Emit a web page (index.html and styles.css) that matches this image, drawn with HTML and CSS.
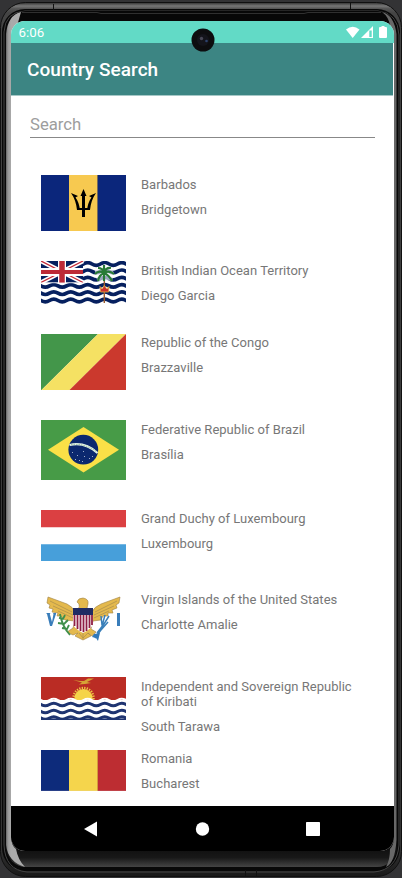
FILE: index.html
```html
<!DOCTYPE html>
<html lang="en">
<head>
<meta charset="utf-8">
<title>Country Search</title>
<link rel="stylesheet" href="styles.css">
</head>
<body>
<div class="device">
  <svg class="frame" viewBox="0 0 402 878" aria-hidden="true">
    <defs>
      <linearGradient id="rim" x1="0" y1="0" x2="0" y2="1">
        <stop offset="0" stop-color="#303030"/><stop offset=".004" stop-color="#777"/><stop offset=".007" stop-color="#555"/><stop offset=".012" stop-color="#444"/><stop offset=".97" stop-color="#333"/><stop offset="1" stop-color="#181818"/>
      </linearGradient>
      <linearGradient id="chin" x1="0" y1="840" x2="0" y2="867" gradientUnits="userSpaceOnUse">
        <stop offset="0" stop-color="#080808"/><stop offset=".65" stop-color="#181818"/><stop offset="1" stop-color="#444"/>
      </linearGradient>
      <linearGradient id="edge" x1="6" y1="0" x2="11" y2="0" gradientUnits="userSpaceOnUse">
        <stop offset="0" stop-color="#666"/><stop offset=".4" stop-color="#999"/><stop offset="1" stop-color="#aaa"/>
      </linearGradient>
    </defs>
    <rect width="402" height="878" fill="#333335"/>
    <rect x=".5" y="2.500" width="401" height="874" rx="25" fill="url(#rim)" stroke="#101010"/>
    <rect x="2" y="9" width="398" height="862" rx="23" fill="#080808"/>
    <path d="M4 845V32Q5 12 25 11H378Q398 13 399 35V845Q397 870 374 872H27Q5 870 4 845" fill="none" stroke="#444"/>
    <rect x="6" y="11" width="391" height="856" rx="20" fill="url(#chin)"/>
    <path d="M6 34Q8 15 21 12L17 26Q11 31 11 41V836Q11 845 16 849Q18 860 25 867Q8 862 6 845Z" fill="url(#edge)"/>
    <path d="M382 12Q394 15 396.500 34V840Q395 863 386 867Q390 860 390 849Q394 845 394 836V41Q394 30 390 26Q389 17 382 12Z" fill="#686868"/>
    <path d="M22 12.500H97L101 13.500H304L308 12.500H381" fill="none" stroke="#303030"/>
    <path d="M53.500 4V10M350.500 3V9M245.500 870V876M256.500 870V876" stroke="#111"/>
  </svg>
  <div class="screen">
    <header class="status">
      <span>6:06</span>
      <svg class="status-icons" viewBox="0 0 42 13" fill="#fff" aria-hidden="true">
        <path d="M0 3.500Q6.700-2 13.500 3.500L6.700 12Z"/>
        <path d="M27 0V12H15Z"/><path d="M23.300 4.500H25.700V11H23.300Z" fill="#62dac6"/>
        <path d="M34 1H35.500V0H38.500V1H40Q41 1 41 2V11Q41 12 40 12H34Q33 12 33 11V2Q33 1 34 1Z"/>
      </svg>
    </header>
    <div class="toolbar"><h1>Country Search</h1></div>
    <main>
      <input class="search" type="text" placeholder="Search" aria-label="Search">
      <ul class="list">
        <li class="row">
          <svg class="flag" style="height:56px" viewBox="0 0 85 56"><path fill="#0b267b" d="M0 0H85V56H0Z"/><path fill="#f7c950" d="M28 0H57V56H28Z"/><path d="M56.500 0V56" stroke="#776b5a"/>
            <path d="M42.500 18V42" stroke="#000" stroke-width="3"/><path d="M37 34H48.500" stroke="#000" stroke-width="2"/><path d="M42.500 14L45.500 21H39.500Z"/><path d="M30 18L37 21L34.500 22.500Q38 27 39 35H36Q35 25 30 18ZM55 18L48 21L50.500 22.500Q47 27 46 35H49Q50 25 55 18Z"/></svg>
          <div class="text"><p>Barbados</p><p>Bridgetown</p></div>
        </li>
        <li class="row">
          <svg class="flag" style="height:42.5px" viewBox="0 0 85 42.500">
            <defs><path id="wave" d="M-8.500 0Q-4.250-2.600 0 0T8.500 0T17 0T25.500 0T34 0T42.500 0T51 0T59.500 0T68 0T76.500 0T85 0T93.500 0"/></defs>
            <path fill="#fff" d="M0 0H85V43H0Z"/>
            <g fill="none" stroke="#06205f" stroke-width="3.700"><use href="#wave" y="3"/><use href="#wave" y="10.300"/><use href="#wave" y="17.600"/><use href="#wave" y="24.900"/><use href="#wave" y="32.200"/><use href="#wave" y="39.500"/></g>
            <path fill="#06205f" d="M0 0H42V21.500H0Z"/><path d="M0 0L42 21.500M42 0L0 21.500" stroke="#fff" stroke-width="4.500"/><path d="M0 0L42 21.500M42 0L0 21.500" stroke="#c52a37" stroke-width="1.300"/><path d="M21 0V22M0 11H42" stroke="#fff" stroke-width="8"/><path d="M21 0V22" stroke="#bd2936" stroke-width="5.500"/><path d="M0 11H42" stroke="#bd2936" stroke-width="4"/>
            <path d="M0 21.800H42" stroke="#fff" stroke-width=".6"/>
            <path d="M63.300 13V42" stroke="#9b5a2c" stroke-width="1.400"/>
            <path d="M54 9L60 5L64 3L70 6L73 12L71 20L64 19L57 21L54 14Z" fill="#fff" opacity=".6"/>
            <path fill="none" stroke="#287a36" stroke-width="2.200" d="M54 13Q58 9 63 12Q68 9 73 13M57 7Q62 7 63 12Q65 6 70 7M63 4V20M57 20Q58 14 63 12Q68 14 71 20"/>
            <path d="M59 25.500L61 28L63.300 24.500L66 28L68 25.500L67.500 31H59.500Z" fill="#ca3030" stroke="#e5b442" stroke-width=".8"/>
          </svg>
          <div class="text"><p>British Indian Ocean Territory</p><p>Diego Garcia</p></div>
        </li>
        <li class="row">
          <svg class="flag" style="height:56.5px" viewBox="0 0 85 56.500"><path fill="#43964a" d="M0 0H57L0 56.500Z"/><path fill="#f5e163" d="M57 0H85L28 56.500H0Z"/><path fill="#cb392d" d="M85 0V56.500H28Z"/></svg>
          <div class="text"><p>Republic of the Congo</p><p>Brazzaville</p></div>
        </li>
        <li class="row">
          <svg class="flag" style="height:59.6px" viewBox="0 0 85 59.600"><path fill="#479b47" d="M0 0H85V60H0Z"/><path fill="#fae047" d="M7 29.800L42.500 7L78 29.800L42.500 52.500Z"/><circle cx="42.300" cy="29.700" r="14.900" fill="#0b286f"/><path d="M28.500 25Q44 21.500 56.500 33" fill="none" stroke="#e8f5e9" stroke-width="2.200"/><path d="M30 24.500Q44 23 56 32" fill="none" stroke="#7cac88" stroke-width=".8" stroke-dasharray="1.500 1"/>
            <path fill="#c5d0df" opacity=".8" d="M31 32h1v1h-1zM36 35h1v1h-1zM42 31h1v1h-1zM34 39h1v1h-1zM43 36h1v1h-1zM48 38h1v1h-1zM51 36h1v1h-1zM41 41h1v1h-1zM38 40h1v1h-1z"/></svg>
          <div class="text"><p>Federative Republic of Brazil</p><p>Brasília</p></div>
        </li>
        <li class="row">
          <svg class="flag" style="height:51px" viewBox="0 0 85 51"><path fill="#fff" d="M0 0H85V51H0Z"/><path fill="#db4042" d="M0 0H85V17.300H0Z"/><path fill="#479fda" d="M0 34.300H85V51H0Z"/></svg>
          <div class="text"><p>Grand Duchy of Luxembourg</p><p>Luxembourg</p></div>
        </li>
        <li class="row">
          <svg class="flag" style="height:56.4px" viewBox="0 0 85 56.400"><path fill="#fff" d="M0 0H85V57H0Z"/>
            <path fill="#e4b94d" stroke="#9d8042" stroke-width=".6" d="M34 30L24 29L20 25L16 25L17 22L11 21L12 18L8 17L9 14L6 12L7 6L26 13Q32 16 34 21L37 18Q39 16 38 13L36 11Q37 7 42 7Q48 8 47 13L46 17Q50 18 51 21Q53 16 60 13L79 6L78 12L75 14L76 17L71 19L72 22L67 22L67 25L62 25L60 29L52 30L50 38L55 41L51 45L47 42L50 45L42 49L34 45L37 42L32 44L26 41L32 37Z"/>
            <path fill="none" stroke="#a78c4d" stroke-width=".7" d="M9 10L31 21M12 15L32 24M17 20L32 27M76 10L54 21M73 15L53 24M68 20L53 27M38 42L42 47L47 42M42 40V48"/>
            <path fill="#fff" d="M32 23H52V32Q52 37 42 42Q32 37 32 32Z"/><path fill="#202b63" d="M32 17H52V24H32Z"/><path d="M33.500 24V35M36.500 24V38M39.500 24V40M42.500 24V41M45.500 24V40M48.500 24V37M51 24V34" stroke="#8f1f45" stroke-width="1.800"/>
            <path fill="none" stroke="#3f8f4b" stroke-width="1.800" d="M19 23Q21 35 29 44M18 27L22 28L24 24M17 32L23 33L27 29M21 37L26 38L28 34"/>
            <path fill="none" stroke="#397fb9" stroke-width="1.500" d="M64 24L60 39L54 47M68 25L63 33L56 42M60 25L61 34M67 31L60 39"/><path fill="#3179b9" d="M53 43L59 42L57 50L55 47L51 46Z"/>
            <path fill="#397dba" d="M5 22H9.500L8.800 23L11 31L12.500 23L12 22H15V23L11 35H9L6 23L5 22ZM76 22H79V35H76Z"/>
          </svg>
          <div class="text"><p>Virgin Islands of the United States</p><p>Charlotte Amalie</p></div>
        </li>
        <li class="row">
          <svg class="flag" style="height:43px" viewBox="0 0 85 43"><path fill="#ba2c24" d="M0 0H85V23H0Z"/>
            <circle cx="42.500" cy="21" r="10" fill="none" stroke="#efc743" stroke-width="2.500" stroke-dasharray="1.300 1.200"/><circle cx="42.500" cy="21" r="9" fill="#f5d448"/>
            <path fill="#fff" d="M0 23H85V43H0Z"/>
            <use href="#wave" y="23" fill="none" stroke="#fff" stroke-width="2"/>
            <g fill="none" stroke="#1f3471" stroke-width="3"><use href="#wave" y="27.500"/><use href="#wave" y="34.500"/><use href="#wave" y="41"/></g>
            <path d="M0 42.300H85" stroke="#1f3471" stroke-width="1.400"/>
            <path fill="#d6a435" d="M32 3L39 4L43 4L47 1.500L53 1.500L46 5L50 6L44 7L38 7.500L41 5.500Z"/></svg>
          <div class="text"><p>Independent and Sovereign Republic of Kiribati</p><p>South Tarawa</p></div>
        </li>
        <li class="row">
          <svg class="flag" style="height:41.5px" viewBox="0 0 85 41.500"><path fill="#0d2b7b" d="M0 0H28V41H0Z"/><path fill="#f5d54c" d="M28 0H57V41H28Z"/><path fill="#bd2d32" d="M57 0H85V41H57Z"/><path d="M56.500 0V41" stroke="#d29b3d"/><path d="M0 41.300H85" stroke="#ded3e4" stroke-width=".7"/></svg>
          <div class="text last"><p>Romania</p><p>Bucharest</p></div>
        </li>
      </ul>
    </main>
    <nav class="nav">
      <svg viewBox="0 0 16 16"><path d="M1 8L14 .500V15.500Z" fill="#fff"/></svg>
      <svg viewBox="0 0 16 16"><circle cx="8.500" cy="8" r="6.700" fill="#fff"/></svg>
      <svg viewBox="0 0 16 16"><rect x="1" y="1" width="14" height="14" rx=".7" fill="#fff"/></svg>
    </nav>
  </div>
  <svg class="camera" viewBox="0 0 24 24" aria-hidden="true"><circle cx="12" cy="12" r="11.500" fill="#0d0d0f"/><circle cx="12" cy="12" r="6" fill="#14141b"/><circle cx="10.500" cy="10.500" r="1.700" fill="#484755"/><circle cx="15.500" cy="13" r="1.300" fill="#2d426c"/></svg>
</div>
</body>
</html>
```
FILE: styles.css
```css
* { box-sizing: border-box; }

body {
  margin: 0;
  font-family: Roboto, sans-serif;
  overflow: hidden;
}

.device {
  position: relative;
  width: 402px;
  height: 878px;
  padding: 21px 8px 27px 11px;
}

.frame {
  position: absolute;
  inset: 0;
  width: 402px;
  height: 878px;
}

.screen {
  position: relative;
  display: flex;
  flex-direction: column;
  height: 830px;
  border-radius: 14px;
  overflow: hidden;
  background: #fff;
}

.status {
  display: flex;
  flex: none;
  justify-content: space-between;
  align-items: center;
  height: 22px;
  padding: 0 6px 0 7.5px;
  background: #62dac6;
  color: #fff;
  font-size: 13.3px;
}

.status-icons {
  width: 42px;
  height: 13px;
}

.toolbar {
  display: flex;
  flex: none;
  align-items: center;
  height: 53px;
  margin-right: 1px;
  padding: 1px 16px 0;
  background: #3c8583;
  border-bottom: 1px solid #a6c8c7;
  color: #fff;
}

h1 {
  margin: 0;
  font-size: 19px;
  font-weight: 500;
  letter-spacing: 0.05px;
}

main {
  flex: 1;
  min-height: 0;
  overflow: hidden;
}

.search {
  display: block;
  width: 345px;
  height: 27px;
  margin: 15px 0 22px 19px;
  padding: 0;
  border: 0;
  border-bottom: 1px solid #888;
  background: none;
  color: #555;
  font: 16.7px Roboto, sans-serif;
}

.search::placeholder { color: #9d9d9d; opacity: 1; }

.list {
  margin: 0;
  padding: 0 30px;
  list-style: none;
}

.row {
  display: flex;
  align-items: flex-start;
  gap: 15px;
  padding: 15px 0;
}

.flag {
  display: block;
  flex: none;
  width: 85px;
}

.text {
  width: 222px;
  height: 0;
  padding-top: 1.8px;
  color: #777;
  font-size: 13px;
  line-height: 15px;
  letter-spacing: 0.02px;
}

.text.last { padding-top: 1.2px; }

.text p { margin: 0 0 10px; }

.nav {
  display: flex;
  flex: none;
  justify-content: space-between;
  align-items: center;
  height: 45px;
  padding: 0 73px 0 72px;
  background: #000;
}

.nav svg {
  width: 16px;
  height: 16px;
}

.camera {
  position: absolute;
  left: 190.5px;
  top: 28px;
  width: 24px;
  height: 24px;
}
```
